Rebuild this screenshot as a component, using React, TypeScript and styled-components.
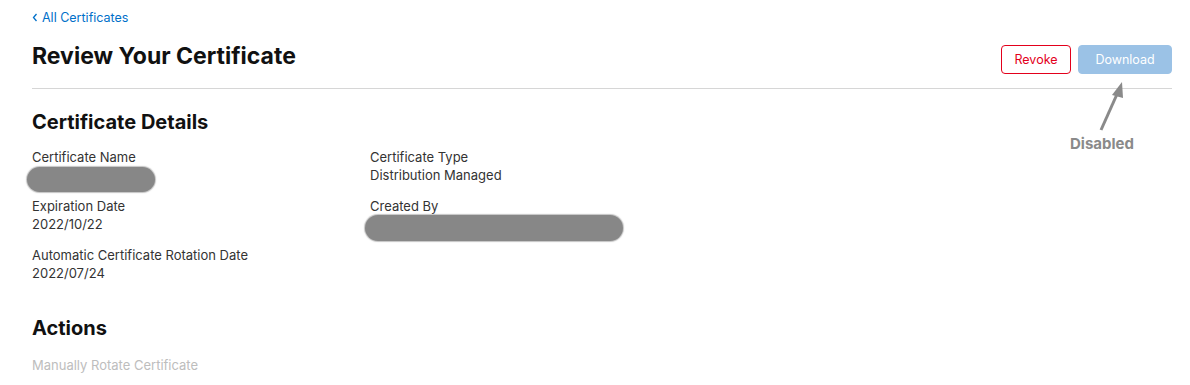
import React from "react";
import styled, { createGlobalStyle } from "styled-components";

const Global = createGlobalStyle`
  html, body { margin: 0; padding: 0; background: #fff; }
  body { font-family: Inter, "Liberation Sans", Arial, sans-serif; color: #1d1d1f; }
`;

const Page = styled.div`
  position: relative;
  width: 1140px;
  padding: 6px 0 0 32px;
`;

const BackLink = styled.a`
  display: inline-flex;
  align-items: center;
  gap: 4px;
  font-size: 12.5px;
  line-height: 18px;
  color: #0070c9;
  text-decoration: none;
`;

const Header = styled.div`
  display: flex;
  align-items: center;
  justify-content: space-between;
  margin-top: 12px;
  padding-bottom: 14px;
  border-bottom: 1px solid #d6d6d6;
`;

const Title = styled.h1`
  margin: 0;
  font-size: 23px;
  line-height: 28px;
  font-weight: 700;
  color: #111;
`;

const Buttons = styled.div`
  display: flex;
  gap: 7px;
  margin-top: 6px;
`;

const Button = styled.button<{ $variant: "danger" | "primary" }>`
  height: 29px;
  box-sizing: border-box;
  border-radius: 4px;
  font-family: inherit;
  font-size: 12.5px;
  padding: 0;
  width: ${(p) => (p.$variant === "danger" ? "70px" : "94px")};
  border: 1px solid ${(p) => (p.$variant === "danger" ? "#e3001b" : "#9bc2e6")};
  background: ${(p) => (p.$variant === "danger" ? "#fff" : "#9bc2e6")};
  color: ${(p) => (p.$variant === "danger" ? "#e3001b" : "#fff")};
`;

const SectionTitle = styled.h2`
  margin: 0;
  font-size: 20px;
  line-height: 24px;
  font-weight: 700;
  color: #111;
`;

const Details = styled.section`
  padding-top: 21px;
`;

const Grid = styled.div`
  display: grid;
  grid-template-columns: 338px 1fr;
  row-gap: 13px;
  margin-top: 14px;
`;

const Field = styled.div`
  display: flex;
  flex-direction: column;
`;

const Label = styled.div`
  font-size: 13px;
  line-height: 18px;
  color: #333;
`;

const Value = styled.div`
  font-size: 13px;
  line-height: 18px;
  color: #333;
`;

const Redacted = styled.div<{ $w: number; $top: number; $h: number }>`
  width: ${(p) => p.$w}px;
  height: ${(p) => p.$h}px;
  margin: ${(p) => p.$top}px 0 ${(p) => 18 - p.$h - p.$top}px -5px;
  border-radius: 13px;
  background: #878787;
  box-shadow: 0 0 1px 1px rgba(135, 135, 135, 0.5);
`;

const Actions = styled.section`
  margin-top: 34px;
`;

const ActionItem = styled.div`
  margin-top: 16px;
  font-size: 13px;
  line-height: 18px;
  color: #bdbdbd;
`;

const Annotation = styled.div`
  position: absolute;
  left: 1060px;
  top: 80px;
  width: 90px;
  display: flex;
  flex-direction: column;
  align-items: center;
`;

const AnnotationText = styled.div`
  margin-top: 2px;
  margin-left: -6px;
  font-size: 15px;
  font-weight: 700;
  color: #8a8a8a;
`;

export default function App() {
  return (
    <>
      <Global />
      <Page>
        <BackLink href="#">
          <svg width="6" height="9" viewBox="0 0 6 9">
            <path d="M4.5 1 L1.5 4.5 L4.5 8" fill="none" stroke="#0070c9" strokeWidth="1.3" />
          </svg>
          All Certificates
        </BackLink>
        <Header>
          <Title>Review Your Certificate</Title>
          <Buttons>
            <Button $variant="danger">Revoke</Button>
            <Button $variant="primary" disabled>Download</Button>
          </Buttons>
        </Header>
        <Details>
          <SectionTitle>Certificate Details</SectionTitle>
          <Grid>
            <Field>
              <Label>Certificate Name</Label>
              <Redacted $w={128} $h={25} $top={1} />
            </Field>
            <Field>
              <Label>Certificate Type</Label>
              <Value>Distribution Managed</Value>
            </Field>
            <Field>
              <Label>Expiration Date</Label>
              <Value>2022/10/22</Value>
            </Field>
            <Field>
              <Label>Created By</Label>
              <Redacted $w={258} $h={26} $top={0} />
            </Field>
            <Field>
              <Label>Automatic Certificate Rotation Date</Label>
              <Value>2022/07/24</Value>
            </Field>
          </Grid>
        </Details>
        <Actions>
          <SectionTitle>Actions</SectionTitle>
          <ActionItem>Manually Rotate Certificate</ActionItem>
        </Actions>
        <Annotation>
          <svg width="90" height="52" viewBox="0 0 90 52">
            <line x1="41" y1="50" x2="58" y2="12" stroke="#8a8a8a" strokeWidth="3" />
            <polygon points="62,2 52,15 63,18" fill="#8a8a8a" />
          </svg>
          <AnnotationText>Disabled</AnnotationText>
        </Annotation>
      </Page>
    </>
  );
}
